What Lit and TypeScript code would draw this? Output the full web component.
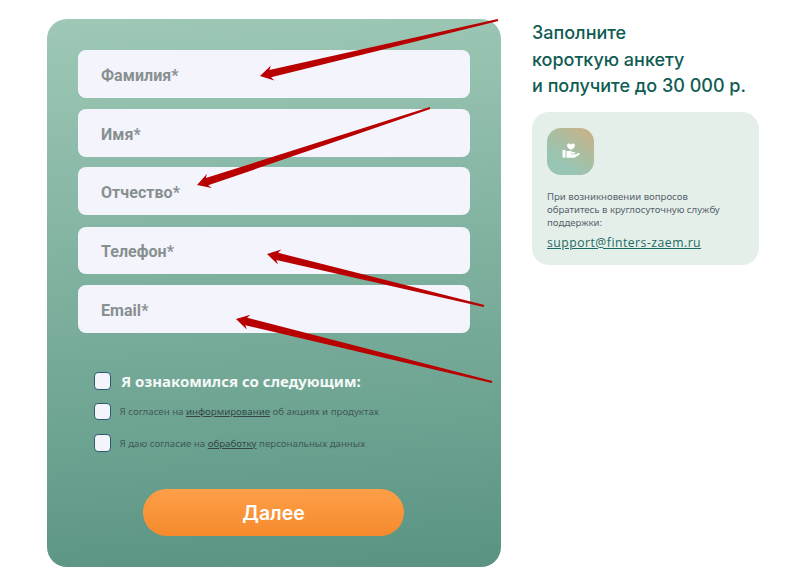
import { LitElement, html, css, svg } from "lit";
import { customElement } from "lit/decorators.js";

function arrow(x1: number, y1: number, x2: number, y2: number) {
  // tapered shaft from tail (x1,y1) to tip (x2,y2) with a barbed head
  const dx = x2 - x1, dy = y2 - y1;
  const len = Math.hypot(dx, dy);
  const ux = dx / len, uy = dy / len, nx = -uy, ny = ux;
  const at = (along: number, off: number) =>
    `${(x2 - ux * along + nx * off).toFixed(1)},${(y2 - uy * along + ny * off).toFixed(1)}`;
  const pts = [
    at(0, 0), at(13, 7.6), at(10.5, 3.8), at(len, 1.1), at(len, -1.1), at(10.5, -3.8), at(13, -7.6),
  ].join(" ");
  return svg`<polygon points=${pts} fill="#b90000"></polygon>`;
}

const FIELDS: [string, number, number][] = [
  ["Фамилия*", 48, 11],
  ["Имя*", 48, 10],
  ["Отчество*", 48, 12],
  ["Телефон*", 47, 11],
  ["Email*", 48, 0],
];

@customElement("app-root")
export class AppRoot extends LitElement {
  static styles = css`
    :host { display: block; position: relative; width: 800px; height: 588px; background: #fff; overflow: hidden; font-family: "Noto Sans", sans-serif; }
    .page { display: flex; align-items: flex-start; padding: 19px 0 0 47px; gap: 31px; }
    .card { width: 454px; height: 548px; box-sizing: border-box; padding: 31px 31px 0; border-radius: 20px;
      background: linear-gradient(176deg, #9fc8b6 0%, #72a795 65%, #5a9383 100%); display: flex; flex-direction: column; }
    .fields { display: flex; flex-direction: column; }
    .field { border-radius: 8px; background: #f4f4fd; display: flex; align-items: center; padding: 2px 0 0 23px;
      font-family: "Roboto", sans-serif; font-size: 16px; font-weight: 700; color: #87908f; box-sizing: border-box; letter-spacing: 0.05px; }
    .checks { display: flex; flex-direction: column; margin: 38px 0 0 15.500px; }
    .row { display: flex; align-items: center; }
    .row.head { height: 20px; gap: 10px; }
    .row.small { height: 18px; gap: 8.500px; margin-top: 11.500px; }
    .box { width: 17.500px; height: 17.500px; box-sizing: border-box; border: 1.5px solid #2f5a70; border-radius: 4px; background: #f4f4fd; flex: none; }
    .head-label { font-size: 15px; font-weight: 700; color: #f4f8f6; }
    .small-label { font-size: 9.700px; color: #3f5a58; }
    .small-label u { color: #34474a; }
    .small + .small { margin-top: 13.500px; }
    .btn { align-self: flex-start; margin: 37px 0 0 65px; width: 261px; height: 47px; border-radius: 24px;
      background: linear-gradient(180deg, #fe9f48 0%, #f58a2d 100%); color: #fff; display: flex; align-items: center; justify-content: center;
      font-family: "Inter", sans-serif; font-size: 19.500px; font-weight: 600; }
    .side { width: 227px; display: flex; flex-direction: column; }
    h2 { margin: 0; padding-top: 1px; font-size: 18px; line-height: 26.500px; font-weight: 500; color: #0f5c53; font-family: "Inter", sans-serif; white-space: nowrap; }
    .info { margin-top: 12px; height: 153px; box-sizing: border-box; background: #e5efea; border-radius: 17px; padding: 16px 15px 0; }
    .icon { width: 47px; height: 47px; border-radius: 14px; background: linear-gradient(215deg, #cdb185 0%, #a5c0a5 50%, #98c5b4 75%); display: flex; align-items: center; justify-content: center; }
    .info p { margin: 15px 0 0; font-size: 9.600px; line-height: 13px; color: #55626a; white-space: nowrap; }
    .info a { display: block; margin-top: 6px; font-size: 12.200px; line-height: 16px; color: #1b6b62; text-decoration: underline; font-family: "Open Sans", sans-serif; letter-spacing: 0.5px; }
    .arrows { position: absolute; inset: 0; width: 800px; height: 588px; pointer-events: none; }
  `;

  render() {
    return html`
      <div class="page">
        <div class="card">
          <div class="fields">
            ${FIELDS.map(
              ([label, h, gap]) => html`<div class="field" style="height:${h}px;margin-bottom:${gap}px">${label}</div>`
            )}
          </div>
          <div class="checks">
            <div class="row head"><span class="box"></span><span class="head-label">Я ознакомился со следующим:</span></div>
            <div class="row small"><span class="box"></span><span class="small-label">Я согласен на <u>информирование</u> об акциях и продуктах</span></div>
            <div class="row small"><span class="box"></span><span class="small-label">Я даю согласие на <u>обработку</u> персональных данных</span></div>
          </div>
          <div class="btn">Далее</div>
        </div>
        <div class="side">
          <h2>Заполните<br />короткую анкету<br />и получите до 30 000 р.</h2>
          <div class="info">
            <div class="icon">
              <svg width="18" height="16" viewBox="0 0 18 16" fill="#fff">
                <path d="M9.5 0.5c-1 0-1.6.5-2 1-.4-.5-1-1-2-1C4.300.5 3.500 1.400 3.500 2.500c0 1.800 2.200 3.200 4 4.500 1.800-1.300 4-2.700 4-4.500 0-1.100-.8-2-2-2z" transform="translate(1.500 0)"/>
                <rect x="0.500" y="7" width="3" height="7.500"/>
                <path d="M4.500 8h3.500c1 0 1.800.4 2.500 1h2c.8 0 .8 1.500 0 1.500H9v.8h4.500l3-1.300c1-.4 1.700.7.8 1.400l-4.300 3c-.4.300-.8.400-1.300.4H4.500z"/>
              </svg>
            </div>
            <p>При возникновении вопросов<br />обратитесь в круглосуточную службу<br />поддержки:</p>
            <a>support@finters-zaem.ru</a>
          </div>
        </div>
      </div>
      <svg class="arrows" viewBox="0 0 800 588">
        ${arrow(498, 20, 260, 76)}
        ${arrow(430, 108, 197, 185)}
        ${arrow(484, 306, 267, 254)}
        ${arrow(492, 382, 236, 319)}
      </svg>
    `;
  }
}
